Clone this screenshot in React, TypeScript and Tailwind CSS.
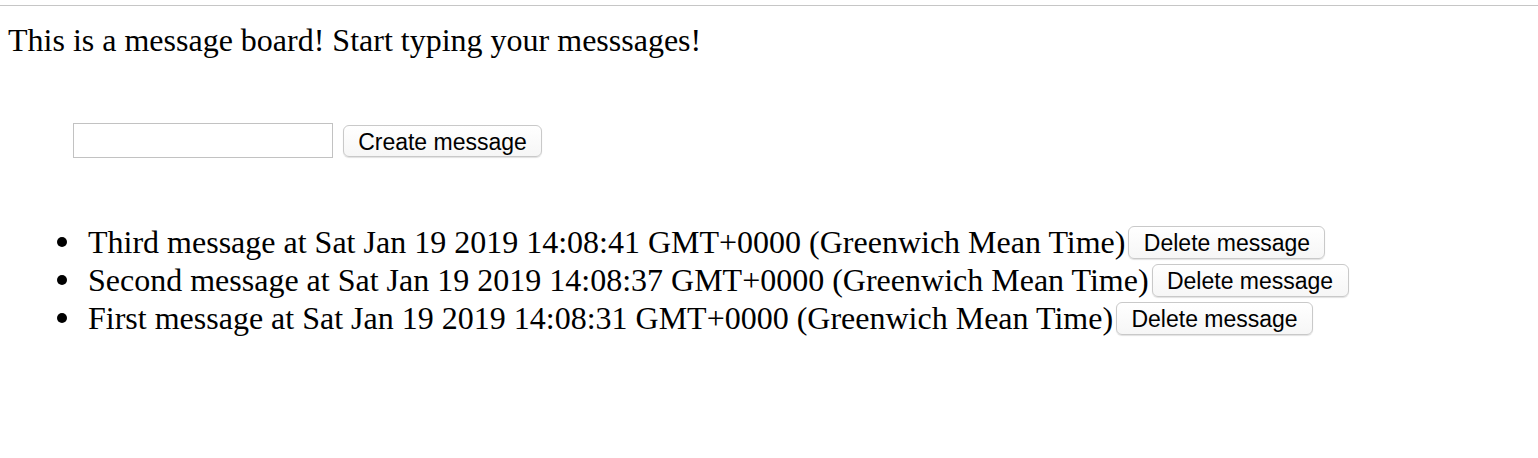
import React, { useState } from 'react';

interface Message {
  id: number;
  text: string;
  time: string;
}

const initialMessages: Message[] = [
  { id: 3, text: 'Third message', time: 'Sat Jan 19 2019 14:08:41 GMT+0000 (Greenwich Mean Time)' },
  { id: 2, text: 'Second message', time: 'Sat Jan 19 2019 14:08:37 GMT+0000 (Greenwich Mean Time)' },
  { id: 1, text: 'First message', time: 'Sat Jan 19 2019 14:08:31 GMT+0000 (Greenwich Mean Time)' },
];

const btn =
  'rounded-[6px] border border-[#c9c9c9] bg-gradient-to-b from-white to-[#f6f6f6] pt-[3px] text-black shadow-[0_1px_1px_rgba(0,0,0,0.12)] font-["Liberation_Sans",Arial,sans-serif] text-[23px] leading-none';

export default function App() {
  const [messages, setMessages] = useState<Message[]>(initialMessages);
  const [input, setInput] = useState('');

  const createMessage = (e: React.FormEvent) => {
    e.preventDefault();
    if (!input.trim()) return;
    const next: Message = {
      id: Date.now(),
      text: input,
      time: new Date().toString(),
    };
    setMessages(prev => [next, ...prev]);
    setInput('');
  };

  const deleteMessage = (id: number) => {
    setMessages(prev => prev.filter(m => m.id !== id));
  };

  return (
    <div className='min-h-[458px] bg-white font-["Liberation_Serif","Times_New_Roman",serif] text-black'>
      <div className="h-[5px]" />
      <div className="border-t border-[#c6c6c6]" />

      <p className="ml-[8px] mt-[16px] text-[32px] leading-[36px]">
        This is a message board! Start typing your messsages!
      </p>

      <form onSubmit={createMessage} className="ml-[73px] mt-[65px] flex items-center gap-[10px]">
        <input
          type="text"
          value={input}
          onChange={e => setInput(e.target.value)}
          className="h-[35px] w-[260px] border border-[#c2c2c2] bg-white px-2 text-[21px] outline-none"
        />
        <button type="submit" className={`${btn} h-[32px] w-[199px]`}>
          Create message
        </button>
      </form>

      <ul className="mt-[65px]">
        {messages.map(m => (
          <li key={m.id} className="flex h-[38px] items-center text-[32px]">
            <span className="ml-[57px] mr-[21px] h-[10px] w-[10px] rounded-full bg-black" />
            <span>
              {m.text} at {m.time}
            </span>
            <button onClick={() => deleteMessage(m.id)} className={`${btn} ml-[3px] h-[33px] w-[197px]`}>
              Delete message
            </button>
          </li>
        ))}
      </ul>
    </div>
  );
}
